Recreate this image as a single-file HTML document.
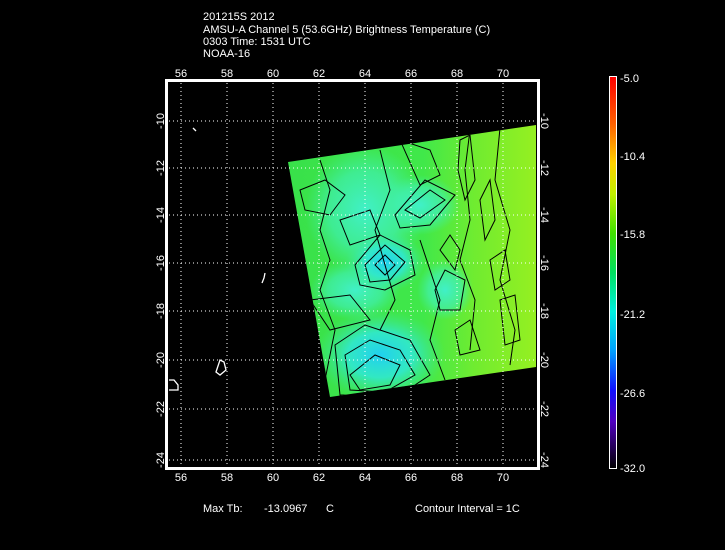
<!DOCTYPE html>
<html><head><meta charset="utf-8"><style>
html,body{margin:0;padding:0;background:#000;}
svg{display:block}
text{font-family:"Liberation Sans",sans-serif;fill:#fff;font-size:11px}
</style></head><body>
<svg width="725" height="550" viewBox="0 0 725 550" xmlns="http://www.w3.org/2000/svg">
<defs>
<linearGradient id="bg" x1="0" y1="0" x2="1" y2="0">
<stop offset="0" stop-color="#38e04a"/>
<stop offset="0.55" stop-color="#40e84a"/>
<stop offset="0.75" stop-color="#70ec30"/>
<stop offset="1" stop-color="#98f020"/>
</linearGradient>
<radialGradient id="c1"><stop offset="0" stop-color="#20d0f0"/><stop offset="0.5" stop-color="#30e8d0" stop-opacity="0.9"/><stop offset="1" stop-color="#40e890" stop-opacity="0"/></radialGradient>
<radialGradient id="c2"><stop offset="0" stop-color="#40f0c8"/><stop offset="0.6" stop-color="#40f0b0" stop-opacity="0.7"/><stop offset="1" stop-color="#40f0a0" stop-opacity="0"/></radialGradient>
<linearGradient id="cb" x1="0" y1="0" x2="0" y2="1">
<stop offset="0" stop-color="#ff0000"/>
<stop offset="0.12" stop-color="#ff6000"/>
<stop offset="0.22" stop-color="#ffd000"/>
<stop offset="0.3" stop-color="#c0f000"/>
<stop offset="0.4" stop-color="#40e000"/>
<stop offset="0.5" stop-color="#00e060"/>
<stop offset="0.6" stop-color="#00f0e0"/>
<stop offset="0.7" stop-color="#00a0ff"/>
<stop offset="0.8" stop-color="#1010ff"/>
<stop offset="0.88" stop-color="#5000c0"/>
<stop offset="1" stop-color="#000000"/>
</linearGradient>
<clipPath id="poly"><polygon points="288,162 536,125 536,367 330,397"/></clipPath>
</defs>
<text x="203" y="20">201215S 2012</text>
<text x="203" y="33">AMSU-A Channel 5 (53.6GHz) Brightness Temperature (C)</text>
<text x="203" y="45">0303 Time: 1531 UTC</text>
<text x="203" y="57">NOAA-16</text>

<g clip-path="url(#poly)">
<rect x="280" y="120" width="260" height="280" fill="url(#bg)"/>
<ellipse cx="365" cy="210" rx="60" ry="65" fill="url(#c2)"/>
<ellipse cx="355" cy="290" rx="45" ry="30" fill="url(#c2)"/>
<ellipse cx="385" cy="262" rx="40" ry="30" fill="url(#c1)"/>
<ellipse cx="380" cy="355" rx="65" ry="45" fill="url(#c1)"/>
<ellipse cx="420" cy="205" rx="40" ry="30" fill="url(#c2)"/>
<ellipse cx="445" cy="290" rx="28" ry="30" fill="url(#c2)"/>
<g fill="none" stroke="#000" stroke-width="1">
<path d="M350,375 L375,355 L400,365 L390,385 L360,390 Z"/>
<path d="M345,355 L370,340 L400,350 L415,375 L385,392 L350,390 Z"/>
<path d="M335,345 L365,325 L410,340 L430,375 L400,395 L340,395 Z"/>
<path d="M375,265 L385,255 L395,265 L385,275 Z"/>
<path d="M365,265 L385,245 L405,262 L390,280 L370,282 Z"/>
<path d="M355,265 L380,235 L410,250 L415,275 L385,290 L360,285 Z"/>
<path d="M405,210 L430,190 L445,200 L420,218 Z"/>
<path d="M395,215 L425,180 L455,195 L430,225 L400,228 Z"/>
<path d="M440,250 L450,235 L460,250 L455,270 Z"/>
<path d="M435,290 L445,270 L465,280 L460,310 L440,310 Z"/>
<path d="M300,190 L325,180 L345,195 L330,215 L305,210 Z"/>
<path d="M340,220 L370,210 L380,235 L350,245 Z"/>
<path d="M460,140 L470,135 L475,180 L465,200 L458,170 Z"/>
<path d="M480,200 L490,180 L495,220 L485,240 Z"/>
<path d="M490,260 L505,250 L510,280 L495,290 Z"/>
<path d="M400,140 L430,150 L440,175 L420,185 Z"/>
<path d="M310,300 L350,295 L370,320 L330,330 Z"/>
<path d="M455,330 L470,320 L480,350 L460,355 Z"/>
<path d="M500,300 L515,295 L520,340 L505,345 Z"/>
<path d="M320,160 L330,190 L320,230 L330,260 L320,290 L335,330 L325,380"/>
<path d="M470,130 L465,170 L470,220 L460,260 L475,300 L470,350"/>
<path d="M500,128 L495,180 L510,230 L500,280 L515,330 L510,365"/>
<path d="M380,150 L390,190 L375,230 L395,300 L380,330"/>
<path d="M420,240 L440,300 L430,340 L445,380"/>
</g>
</g>
<g fill="none" stroke="#fff" stroke-width="1.3">
<path d="M193,128 L196,131"/>
<path d="M265,273 L264,278 L262,283"/>
<path d="M216,372 L220,360 L224,362 L226,370 L220,375 Z"/>
<path d="M169,380 L174,380 L178,385 L178,390 L169,390"/>
</g>

<g stroke="#fff" stroke-width="1" stroke-dasharray="1,3">
<line x1="181" y1="83" x2="181" y2="466"/>
<line x1="227" y1="83" x2="227" y2="466"/>
<line x1="273" y1="83" x2="273" y2="466"/>
<line x1="319" y1="83" x2="319" y2="466"/>
<line x1="365" y1="83" x2="365" y2="466"/>
<line x1="411" y1="83" x2="411" y2="466"/>
<line x1="457" y1="83" x2="457" y2="466"/>
<line x1="503" y1="83" x2="503" y2="466"/>
<line x1="169" y1="121" x2="536" y2="121"/>
<line x1="169" y1="168" x2="536" y2="168"/>
<line x1="169" y1="215" x2="536" y2="215"/>
<line x1="169" y1="263" x2="536" y2="263"/>
<line x1="169" y1="311" x2="536" y2="311"/>
<line x1="169" y1="360" x2="536" y2="360"/>
<line x1="169" y1="409" x2="536" y2="409"/>
<line x1="169" y1="460" x2="536" y2="460"/>
</g>
<rect x="165.5" y="79.5" width="374" height="390" fill="none" stroke="#fff"/>
<rect x="167" y="81" width="371" height="387" fill="none" stroke="#fff" stroke-width="2"/>

<g text-anchor="middle">
<text x="181" y="77">56</text><text x="227" y="77">58</text><text x="273" y="77">60</text><text x="319" y="77">62</text><text x="365" y="77">64</text><text x="411" y="77">66</text><text x="457" y="77">68</text><text x="503" y="77">70</text>
<text x="181" y="481">56</text><text x="227" y="481">58</text><text x="273" y="481">60</text><text x="319" y="481">62</text><text x="365" y="481">64</text><text x="411" y="481">66</text><text x="457" y="481">68</text><text x="503" y="481">70</text>
</g>
<g text-anchor="middle">
<text transform="translate(164,121) rotate(-90)">-10</text>
<text transform="translate(164,168) rotate(-90)">-12</text>
<text transform="translate(164,215) rotate(-90)">-14</text>
<text transform="translate(164,263) rotate(-90)">-16</text>
<text transform="translate(164,311) rotate(-90)">-18</text>
<text transform="translate(164,360) rotate(-90)">-20</text>
<text transform="translate(164,409) rotate(-90)">-22</text>
<text transform="translate(164,460) rotate(-90)">-24</text>
<text transform="translate(541,121) rotate(90)">-10</text>
<text transform="translate(541,168) rotate(90)">-12</text>
<text transform="translate(541,215) rotate(90)">-14</text>
<text transform="translate(541,263) rotate(90)">-16</text>
<text transform="translate(541,311) rotate(90)">-18</text>
<text transform="translate(541,360) rotate(90)">-20</text>
<text transform="translate(541,409) rotate(90)">-22</text>
<text transform="translate(541,460) rotate(90)">-24</text>
</g>

<rect x="609.5" y="76.5" width="7" height="392" fill="url(#cb)" stroke="#fff"/>
<text x="620" y="82">-5.0</text>
<text x="620" y="160">-10.4</text>
<text x="620" y="238">-15.8</text>
<text x="620" y="318">-21.2</text>
<text x="620" y="397">-26.6</text>
<text x="620" y="472">-32.0</text>

<text x="203" y="512">Max Tb:</text>
<text x="264" y="512">-13.0967</text>
<text x="326" y="512">C</text>
<text x="415" y="512">Contour Interval = 1C</text>
</svg>
</body></html>
